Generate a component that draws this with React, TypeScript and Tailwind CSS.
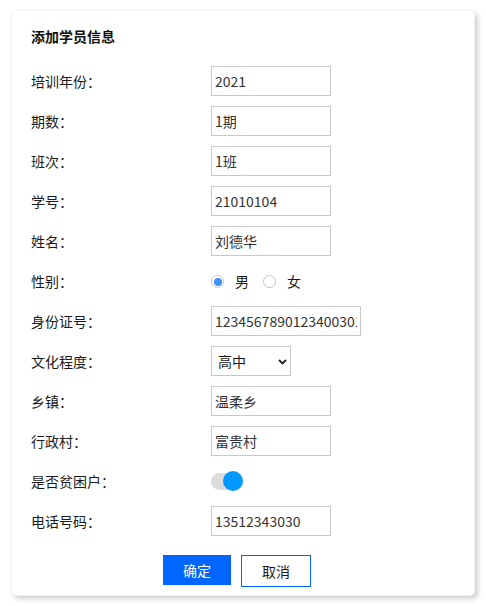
import React from "react";

const font = { fontFamily: '"Noto Sans CJK SC", "Noto Sans", sans-serif' };

function Row({ label, children }: { label: string; children: React.ReactNode }) {
  return (
    <div className="flex items-center h-[30px]">
      <div className="w-[180px] shrink-0 text-[14px] text-[#1a1a1a]">{label}</div>
      <div className="flex items-center">{children}</div>
    </div>
  );
}

function TextInput({ value, w = 120 }: { value: string; w?: number }) {
  return (
    <input
      readOnly
      defaultValue={value}
      style={{ width: w, ...font }}
      className="h-[30px] border border-[#c8c8c8] px-[3px] text-[14px] text-[#333] outline-none bg-white"
    />
  );
}

export default function App() {
  return (
    <div className="w-[486px] h-[606px] bg-white pt-[10px] pl-[11px]" style={font}>
      <div className="w-[464px] h-[586px] rounded-[5px] border border-[#f0f0f0] bg-white shadow-[3px_3px_5px_rgba(0,0,0,0.18)] pl-[19px] pr-[19px] pt-[15px]">
        <div className="h-[20px] leading-[20px] text-[14px] font-bold text-[#111]">添加学员信息</div>
        <div className="mt-[20px] flex flex-col gap-[10px]">
          <Row label="培训年份：">
            <TextInput value="2021" />
          </Row>
          <Row label="期数：">
            <TextInput value="1期" />
          </Row>
          <Row label="班次：">
            <TextInput value="1班" />
          </Row>
          <Row label="学号：">
            <TextInput value="21010104" />
          </Row>
          <Row label="姓名：">
            <TextInput value="刘德华" />
          </Row>
          <Row label="性别：">
            <div className="flex items-center text-[14px] text-[#1a1a1a]">
              <span className="w-[13px] h-[13px] rounded-full border border-[#c4c4c4] flex items-center justify-center mt-[1px]">
                <span className="w-[8px] h-[8px] rounded-full bg-[#3a94f5]" />
              </span>
              <span className="ml-[11px]">男</span>
              <span className="ml-[14px] w-[13px] h-[13px] rounded-full border border-[#c4c4c4] mt-[1px]" />
              <span className="ml-[11px]">女</span>
            </div>
          </Row>
          <Row label="身份证号：">
            <TextInput value="12345678901234003012" w={150} />
          </Row>
          <Row label="文化程度：">
            <div className="relative w-[80px] h-[30px] border border-[#c8c8c8] bg-white flex items-center">
              <span className="pl-[6px] text-[14px] text-[#1a1a1a]">高中</span>
              <svg className="absolute left-[66px] top-[12px]" width="9" height="6" viewBox="0 0 9 6">
                <path d="M1 1 L4.5 4.5 L8 1" fill="none" stroke="#222" strokeWidth="1.8" />
              </svg>
            </div>
          </Row>
          <Row label="乡镇：">
            <TextInput value="温柔乡" />
          </Row>
          <Row label="行政村：">
            <TextInput value="富贵村" />
          </Row>
          <Row label="是否贫困户：">
            <div className="relative w-[32px] h-[20px]">
              <div className="absolute left-0 top-[2px] w-[30px] h-[17px] rounded-full bg-[#dcdcdc]" />
              <div className="absolute left-[12px] top-0 w-[20px] h-[20px] rounded-full bg-[#0099ff]" />
            </div>
          </Row>
          <Row label="电话号码：">
            <TextInput value="13512343030" />
          </Row>
        </div>
        <div className="mt-[19px] flex items-start gap-[10px] pl-[132px]">
          <button className="w-[68px] h-[30px] bg-[#0066ff] text-white text-[14px]">确定</button>
          <button className="w-[70px] h-[32px] border border-[#0066ff] bg-white text-[#1a1a1a] text-[14px]">取消</button>
        </div>
      </div>
    </div>
  );
}
